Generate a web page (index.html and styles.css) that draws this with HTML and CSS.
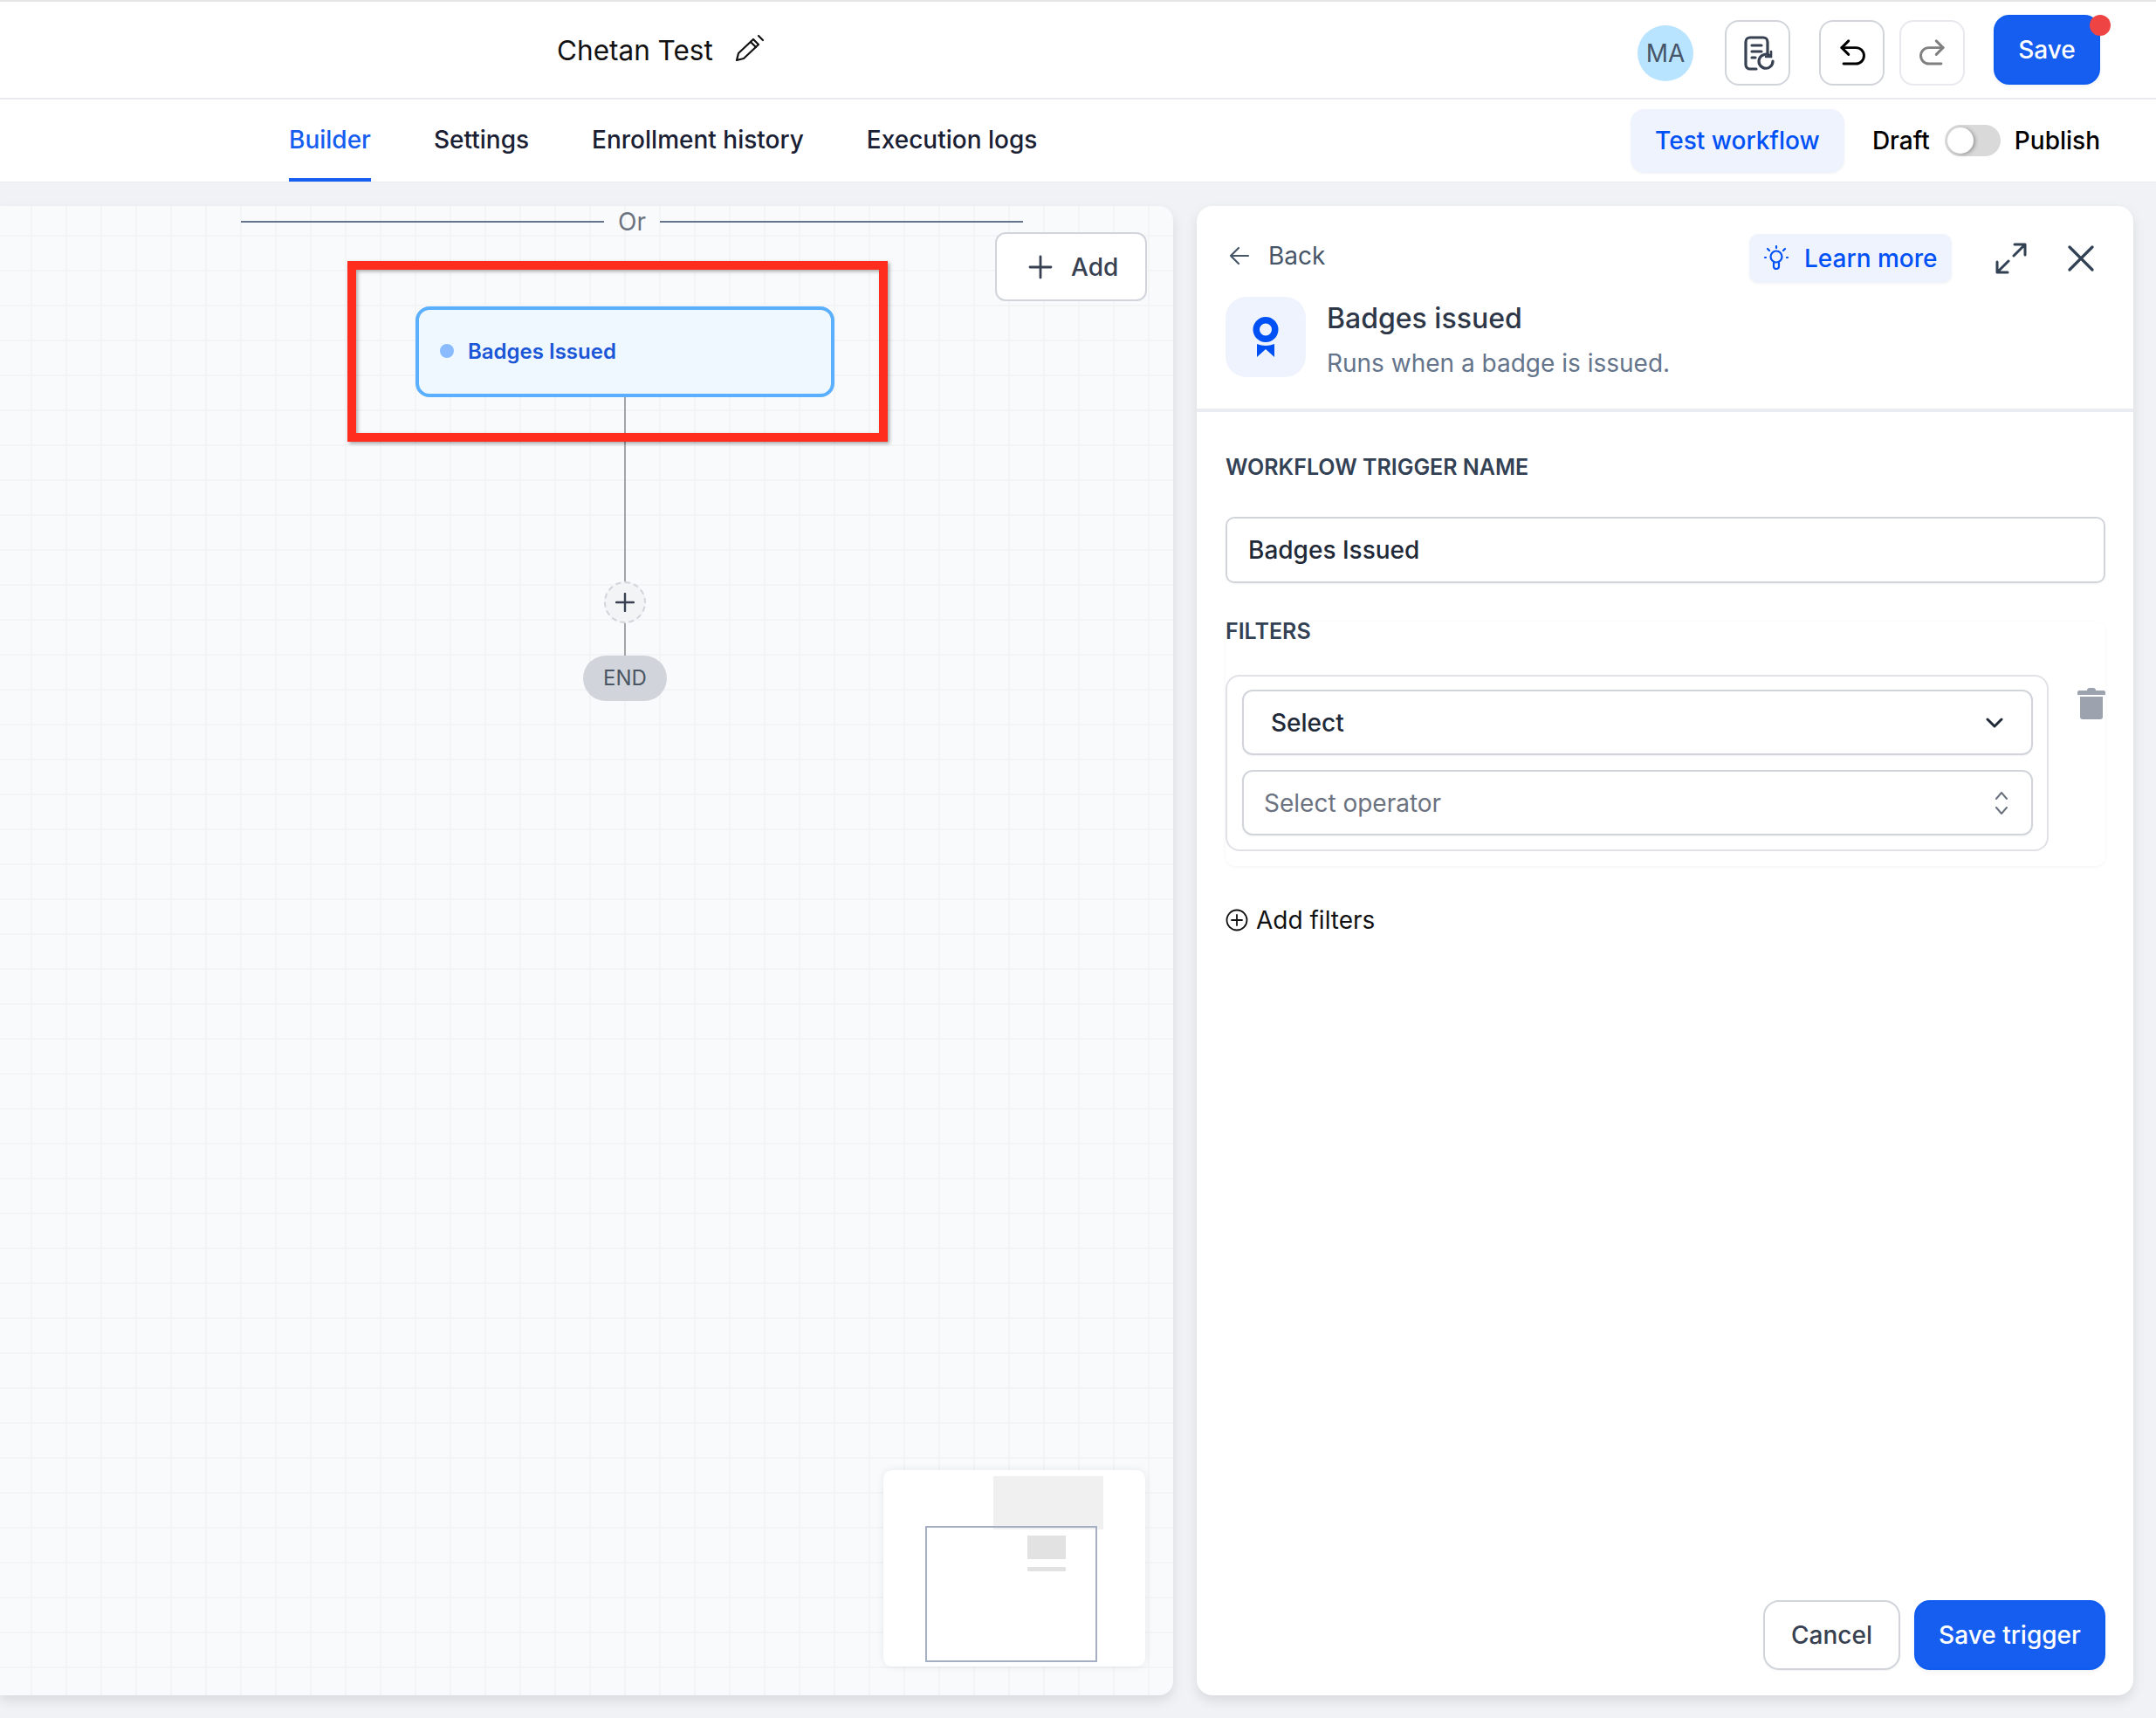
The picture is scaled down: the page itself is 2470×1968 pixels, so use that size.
FILE: index.html
```html
<!DOCTYPE html>
<html lang="en">
<head>
    <meta charset="UTF-8">
    <title>Chetan Test - Workflow builder</title>
    <link rel="stylesheet" href="styles.css">
</head>
<body>
    <header class="topbar">
        <div class="title">
            <span>Chetan Test</span>
            <svg class="pencil" width="34" height="32" viewBox="0 0 34 32" fill="none" stroke="#111" stroke-width="2.2" stroke-linejoin="round" stroke-linecap="round">
                <path d="M2 30l2-8L21 6l6 6-17 16z"/>
                <path d="M18 9l6 6"/>
                <path d="M27 2l5 5"/>
            </svg>
        </div>
        <div class="top-actions">
            <div class="avatar">MA</div>
            <button class="icon-btn">
                <svg class="doc-icon" width="36" height="40" viewBox="0 0 36 40" fill="none" stroke="#374151" stroke-width="3.2" stroke-linecap="round">
                    <path d="M14 38H7a5 5 0 0 1-5-5V7a5 5 0 0 1 5-5h15a5 5 0 0 1 5 5v13"/>
                    <path d="M9 11h11M9 18h11M9 25h4"/>
                    <path d="M33 29a8 8 0 1 1-3-6"/>
                    <path d="M31 18v6h-6" stroke-width="2.6"/>
                </svg>
            </button>
            <div class="undo-group">
                <button class="icon-btn">
                    <svg width="34" height="34" viewBox="0 0 24 24" fill="none" stroke="#000" stroke-width="2.1" stroke-linecap="round" stroke-linejoin="round">
                        <path d="M9 13 3.5 7.5 9 2"/>
                        <path d="M3.5 7.5H15a6 6 0 0 1 0 13H5"/>
                    </svg>
                </button>
                <button class="icon-btn is-disabled">
                    <svg width="34" height="34" viewBox="0 0 24 24" fill="none" stroke="#808080" stroke-width="2.1" stroke-linecap="round" stroke-linejoin="round">
                        <path d="M15 13l5.500-5.500L15 2"/>
                        <path d="M20.500 7.500H9a6 6 0 0 0 0 13h10"/>
                    </svg>
                </button>
            </div>
            <button class="btn btn-primary btn-save">Save<span class="red-dot"></span></button>
        </div>
    </header>

    <nav class="tabbar">
        <div class="tabs">
            <a class="tab active">Builder</a>
            <a class="tab">Settings</a>
            <a class="tab">Enrollment history</a>
            <a class="tab">Execution logs</a>
        </div>
        <div class="publish-row">
            <button class="btn-soft">Test workflow</button>
            <span class="state state-draft">Draft</span>
            <span class="toggle"><span class="knob"></span></span>
            <span class="state">Publish</span>
        </div>
    </nav>

    <main class="workspace">
        <section class="canvas">
            <div class="or-row">
                <span class="or-line"></span>
                <span class="or-text">Or</span>
                <span class="or-line"></span>
            </div>

            <button class="add-btn">
                <svg width="28" height="28" viewBox="0 0 28 28" fill="none" stroke="#374151" stroke-width="2.8" stroke-linecap="round">
                    <path d="M14 2v24M2 14h24"/>
                </svg>
                Add
            </button>

            <div class="red-box"></div>
            <div class="edge edge-one"></div>
            <div class="edge edge-two"></div>
            <div class="node"><span class="node-dot"></span>Badges Issued</div>
            <div class="plus-node">
                <svg width="22" height="22" viewBox="0 0 22 22" fill="none" stroke="#374151" stroke-width="2.4" stroke-linecap="round">
                    <path d="M11 1v20M1 11h20"/>
                </svg>
            </div>
            <div class="end-node">END</div>

            <svg class="minimap" width="300" height="225" viewBox="0 0 300 225">
                <rect x="126" y="7" width="126" height="61" fill="#f0f0f0"/>
                <rect x="165" y="75" width="44" height="27" fill="#e2e2e2"/>
                <rect x="165" y="111" width="44" height="5" rx="1" fill="#e2e2e2"/>
                <rect x="49" y="65" width="195" height="154" fill="none" stroke="#a5afc3" stroke-width="2"/>
            </svg>
        </section>

        <aside class="panel">
            <div class="panel-head">
                <div class="panel-tools">
                    <a class="back">
                        <svg width="24" height="22" viewBox="0 0 24 22" fill="none" stroke="#475569" stroke-width="2.2" stroke-linecap="round" stroke-linejoin="round">
                            <path d="M11 2 2 11l9 9M2 11h20"/>
                        </svg>
                        Back
                    </a>
                    <button class="learn-btn">
                        <svg width="30" height="32" viewBox="0 0 30 32" fill="none" stroke="#0051f5" stroke-width="2.2" stroke-linecap="round">
                            <circle cx="15" cy="14" r="6.500"/>
                            <path d="M12 21v4a3 3 0 0 0 6 0v-4"/>
                            <path d="M15 2v2M5 5l2 2M25 5l-2 2M2 15h1M27 15h1"/>
                        </svg>
                        Learn more
                    </button>
                    <svg class="expand" width="36" height="36" viewBox="0 0 36 36" fill="none" stroke="#334155" stroke-width="3" stroke-linecap="round" stroke-linejoin="round">
                        <path d="M22 2h12v12M34 2 21 15M14 34H2V22M2 34l13-13"/>
                    </svg>
                    <svg class="close" width="30" height="30" viewBox="0 0 30 30" fill="none" stroke="#334155" stroke-width="3.2" stroke-linecap="round">
                        <path d="M2 2l26 26M28 2 2 28"/>
                    </svg>
                </div>
                <div class="trigger-info">
                    <div class="trigger-icon">
                        <svg width="32" height="46" viewBox="0 0 32 46" fill="#0051f5">
                            <path fill-rule="evenodd" d="M16 0a14.500 14.500 0 1 1 0 29 14.500 14.500 0 0 1 0-29zm0 7.500a7 7 0 1 0 0 14 7 7 0 0 0 0-14z"/>
                            <path d="M6 31q10 4 20 0v15l-10-9-10 9z"/>
                        </svg>
                    </div>
                    <div>
                        <h2>Badges issued</h2>
                        <p>Runs when a badge is issued.</p>
                    </div>
                </div>
            </div>

            <div class="panel-body">
                <label class="field-label">WORKFLOW TRIGGER NAME</label>
                <div class="text-input">Badges Issued</div>

                <label class="field-label filters-label">FILTERS</label>
                <div class="filter-card">
                    <div class="filter-box">
                        <div class="select">
                            <span class="select-value">Select</span>
                            <svg width="20" height="12" viewBox="0 0 20 12" fill="none" stroke="#1f2937" stroke-width="3" stroke-linecap="round" stroke-linejoin="round">
                                <path d="M2 2l8 8 8-8"/>
                            </svg>
                        </div>
                        <div class="select select-op">
                            <span>Select operator</span>
                            <svg width="18" height="28" viewBox="0 0 18 28" fill="none" stroke="#6b7280" stroke-width="2" stroke-linecap="round" stroke-linejoin="round">
                                <path d="M3 9l6-7 6 7M3 19l6 7 6-7"/>
                            </svg>
                        </div>
                    </div>
                    <svg class="trash" width="32" height="36" viewBox="0 0 32 36" fill="#9ca3af">
                        <path d="M11 3q0-3 3-3h4q3 0 3 3h9q2 0 2 2v3H0V5q0-2 2-2z"/>
                        <path d="M3 10h26v23q0 3-3 3H6q-3 0-3-3z"/>
                    </svg>
                </div>

                <a class="add-filter">
                    <svg width="26" height="26" viewBox="0 0 26 26" fill="none" stroke="#111" stroke-width="1.800" stroke-linecap="round">
                        <circle cx="13" cy="13" r="11.500"/>
                        <path d="M13 7v12M7 13h12"/>
                    </svg>
                    Add filters
                </a>
            </div>

            <div class="panel-foot">
                <button class="btn btn-outline">Cancel</button>
                <button class="btn btn-primary btn-trigger">Save trigger</button>
            </div>
        </aside>
    </main>
</body>
</html>
```

FILE: styles.css
```css
/* general */
* {
    margin: 0;
    padding: 0;
    box-sizing: border-box;
}

html, body {
    height: 1968px;
    overflow: hidden;
}

body {
    display: flex;
    flex-direction: column;
    font-family: 'Inter', 'Liberation Sans', sans-serif;
    background-color: #f1f2f6;
    color: #111827;
}

button {
    font-family: inherit;
    cursor: pointer;
}

/* top header */
.topbar {
    display: flex;
    align-items: center;
    justify-content: space-between;
    height: 114px;
    padding: 0 64px 0 638px;
    background-color: #fff;
    border-top: 2px solid #e5e5e7;
    border-bottom: 2px solid #e9eaef;
}

.title {
    display: flex;
    align-items: center;
    gap: 25px;
    font-size: 31.500px;
    color: #111;
}

.pencil {
    margin-top: -4px;
}

.top-actions {
    display: flex;
    align-items: center;
    margin-top: 7px;
}

.avatar {
    display: flex;
    align-items: center;
    justify-content: center;
    width: 64px;
    height: 64px;
    margin-right: 36px;
    border-radius: 50%;
    background-color: #b9e4ff;
    color: #475569;
    font-size: 28px;
}

.icon-btn {
    display: flex;
    align-items: center;
    justify-content: center;
    width: 75px;
    height: 75px;
    background-color: #fff;
    border: 2px solid #d1d5db;
    border-radius: 16px;
}

.icon-btn.is-disabled {
    border-color: #e7e9ee;
}

.doc-icon {
    margin-left: 5px;
}

.undo-group {
    display: flex;
    gap: 17px;
    margin-left: 33px;
    margin-right: 33px;
}

.btn {
    border-radius: 18px;
    font-size: 28px;
    font-weight: 500;
}

.btn-primary {
    position: relative;
    background-color: #165ef0;
    border: 2px solid #0f5cf0;
    color: #fff;
    box-shadow: 0 2px 4px rgba(0,0,0,0.06);
}

.btn-save {
    width: 122px;
    height: 80px;
    margin-top: -7px;
}

.red-dot {
    position: absolute;
    top: -2px;
    right: -14px;
    width: 24px;
    height: 24px;
    border-radius: 50%;
    background-color: #ef4444;
}

/* tabs */
.tabbar {
    display: flex;
    align-items: center;
    justify-content: space-between;
    height: 95px;
    padding: 0 64px 0 331px;
    background-color: #fff;
    border-bottom: 1px solid #e9eaef;
}

.tabs {
    display: flex;
    gap: 72px;
    height: 100%;
}

.tab {
    display: flex;
    align-items: center;
    padding-top: 2px;
    border-bottom: 4px solid transparent;
    font-size: 28px;
    font-weight: 500;
    color: #1a2033;
}

.tab.active {
    color: #165ef0;
    border-bottom-color: #165ef0;
}

.publish-row {
    display: flex;
    align-items: center;
}

.btn-soft {
    width: 245px;
    height: 73px;
    margin-right: 32px;
    background-color: #eff3fd;
    border: none;
    border-radius: 16px;
    box-shadow: 0 1px 3px rgba(0,0,0,0.05);
    color: #0051f5;
    font-size: 28px;
    font-weight: 500;
}

.state {
    font-size: 28px;
    font-weight: 500;
    color: #000;
}

.toggle {
    position: relative;
    width: 64px;
    height: 36px;
    margin: 0 16px 0 17px;
    border-radius: 18px;
    background-color: #d9d9d9;
}

.knob {
    position: absolute;
    top: 3px;
    left: 3px;
    width: 30px;
    height: 30px;
    border-radius: 50%;
    background-color: #fff;
    box-shadow: 2px 1px 4px rgba(0,0,0,0.3);
}

/* builder area */
.workspace {
    flex: 1;
    display: flex;
    gap: 27px;
    padding: 27px 26px 26px 0;
    min-height: 0;
}

.canvas {
    position: relative;
    width: 1344px;
    overflow: hidden;
    border-radius: 0 16px 16px 0;
    background-color: #f9fafb;
    background-image:
        linear-gradient(to right, #f3f4f6 2px, transparent 2px),
        linear-gradient(to bottom, #f3f4f6 2px, transparent 2px);
    background-size: 40px 40px;
    background-position: 35px 33px;
    box-shadow: 0 6px 14px rgba(0,0,0,0.1);
}

.or-row {
    position: absolute;
    top: 1px;
    left: 276px;
    display: flex;
    align-items: center;
    gap: 16px;
    width: 896px;
    height: 34px;
    color: #6b7280;
    font-size: 28px;
}

.or-line {
    flex: 1;
    height: 2px;
    background-color: #64748b;
}

.add-btn {
    position: absolute;
    top: 30px;
    left: 1140px;
    display: flex;
    align-items: center;
    gap: 21px;
    width: 174px;
    height: 79px;
    padding-left: 36px;
    background-color: #fff;
    border: 2px solid #d1d5db;
    border-radius: 12px;
    color: #374151;
    font-size: 28px;
    font-weight: 500;
}

.red-box {
    position: absolute;
    top: 63px;
    left: 398px;
    z-index: 2;
    width: 619px;
    height: 207px;
    border: 10px solid #ff2d1e;
    box-shadow: 2px 2px 4px rgba(0,0,0,0.35), inset 2px 2px 4px rgba(0,0,0,0.3);
}

.node {
    position: absolute;
    top: 115px;
    left: 476px;
    display: flex;
    align-items: center;
    gap: 16px;
    width: 480px;
    height: 104px;
    padding-left: 24px;
    padding-bottom: 2px;
    background-color: #eff7ff;
    border: 4px solid #5ab0ff;
    border-radius: 16px;
    color: #1a56d6;
    font-size: 24px;
    font-weight: 600;
}

.node-dot {
    width: 16px;
    height: 16px;
    border-radius: 50%;
    background-color: #8abbff;
}

.edge {
    position: absolute;
    left: 715px;
    width: 2px;
    background-color: #a3a3a8;
}

.edge-one {
    top: 219px;
    height: 211px;
}

.edge-two {
    top: 477px;
    height: 38px;
}

.plus-node {
    position: absolute;
    top: 430px;
    left: 692px;
    display: flex;
    align-items: center;
    justify-content: center;
    width: 48px;
    height: 48px;
    background-color: #f3f4f6;
    border: 2px dashed #d1d5db;
    border-radius: 50%;
}

.end-node {
    position: absolute;
    top: 515px;
    left: 668px;
    display: flex;
    align-items: center;
    justify-content: center;
    width: 96px;
    height: 52px;
    padding-bottom: 2px;
    background-color: #d1d5db;
    border-radius: 26px;
    color: #4b5563;
    font-size: 24px;
}

.minimap {
    position: absolute;
    top: 1448px;
    left: 1012px;
    background-color: #fff;
    border-radius: 10px;
    box-shadow: 0 0 10px rgba(0,0,0,0.08);
}

/* side panel */
.panel {
    flex: 1;
    display: flex;
    flex-direction: column;
    background-color: #fff;
    border-radius: 18px;
    box-shadow: 0 6px 14px rgba(0,0,0,0.1);
}

.panel-head {
    height: 236px;
    padding: 32px 32px 0 33px;
    border-bottom: 4px solid #ebecf1;
}

.panel-tools {
    display: flex;
    align-items: center;
    height: 56px;
}

.back {
    display: flex;
    align-items: center;
    gap: 21px;
    margin-left: 4px;
    margin-top: -6px;
    color: #475569;
    font-size: 28px;
}

.learn-btn {
    display: flex;
    align-items: center;
    gap: 17px;
    width: 232px;
    height: 56px;
    margin-left: auto;
    padding-left: 16px;
    background-color: #eff3fd;
    border: none;
    border-radius: 10px;
    box-shadow: 0 1px 3px rgba(0,0,0,0.05);
    color: #0051f5;
    font-size: 28px;
    font-weight: 500;
}

.expand {
    margin-left: 50px;
    margin-right: 47px;
}

.close {
    margin-right: 13px;
}

.trigger-info {
    display: flex;
    gap: 24px;
    margin-top: 16px;
}

.trigger-icon {
    display: flex;
    align-items: center;
    justify-content: center;
    width: 92px;
    height: 92px;
    background-color: #eff3fd;
    border-radius: 24px;
}

.trigger-info h2 {
    margin-top: 4px;
    font-size: 32px;
    font-weight: 500;
    line-height: 42px;
    color: #2d3748;
}

.trigger-info p {
    margin-top: 10px;
    font-size: 28px;
    line-height: 40px;
    color: #64748b;
}

.panel-body {
    flex: 1;
    padding: 48px 32px 0 33px;
}

.field-label {
    display: block;
    font-size: 25px;
    font-weight: 600;
    line-height: 30px;
    color: #334155;
}

.text-input {
    display: flex;
    align-items: center;
    height: 76px;
    margin-top: 42px;
    padding-left: 24px;
    background-color: #fff;
    border: 2px solid #d1d5db;
    border-radius: 10px;
    box-shadow: 0 1px 2px rgba(0,0,0,0.05);
    color: #1f2937;
    font-size: 28px;
    font-weight: 500;
}

.filters-label {
    margin-top: 40px;
}

.filter-card {
    display: flex;
    gap: 33px;
    margin-top: -26px;
    padding: 61px 0 17px;
    border-radius: 12px;
    box-shadow: 0 1px 4px rgba(0,0,0,0.05);
}

.filter-box {
    display: flex;
    flex-direction: column;
    gap: 17px;
    width: 943px;
    padding: 15px 16px 16px 17px;
    border: 2px solid #e0e2e7;
    border-radius: 16px;
}

.select {
    display: flex;
    align-items: center;
    justify-content: space-between;
    height: 75px;
    padding: 0 32px 0 31px;
    border: 2px solid #d1d5db;
    border-radius: 12px;
    box-shadow: 0 1px 2px rgba(0,0,0,0.05);
    color: #1f2937;
    font-size: 28px;
    font-weight: 500;
}

.select-op {
    padding-left: 23px;
    padding-right: 25px;
    color: #6b7280;
    font-weight: 400;
}

.trash {
    margin-top: 15px;
}

.add-filter {
    display: flex;
    align-items: center;
    gap: 9px;
    margin-top: 45px;
    color: #111;
    font-size: 28px;
}

.panel-foot {
    display: flex;
    justify-content: flex-end;
    gap: 16px;
    padding: 0 32px 29px;
}

.btn-outline {
    width: 157px;
    height: 80px;
    background-color: #fff;
    border: 2px solid #d1d5db;
    box-shadow: 0 1px 2px rgba(0,0,0,0.05);
    color: #374151;
}

.btn-trigger {
    width: 219px;
    height: 80px;
}
```
